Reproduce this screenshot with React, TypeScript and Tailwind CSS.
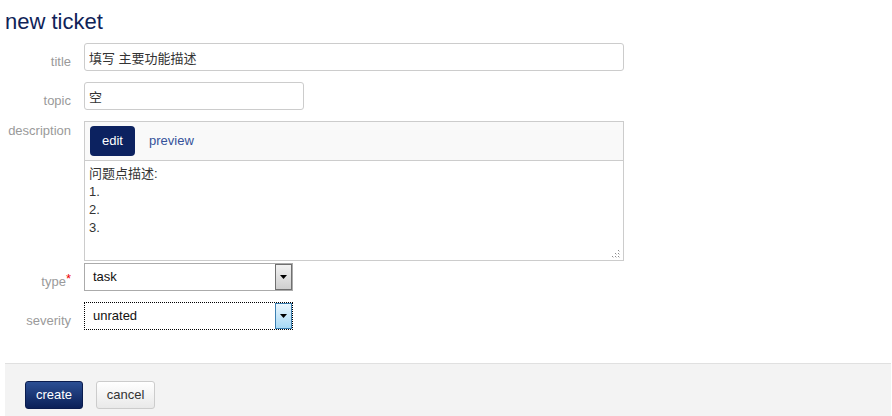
import React from "react";

const font = "font-['Liberation_Sans','Noto_Sans_CJK_SC',sans-serif]";

function Label({ children, pad }: { children: React.ReactNode; pad: string }) {
  return (
    <div className={`w-[66px] shrink-0 text-right text-[13px] leading-[16px] text-[#9a9a9a] ${pad}`}>
      {children}
    </div>
  );
}

function Arrow({ focused }: { focused?: boolean }) {
  return (
    <div
      className={
        focused
          ? "flex h-full w-[17px] items-center justify-center border border-[#3c7fb1] bg-gradient-to-b from-[#eaf6fd] to-[#a7d9f5]"
          : "flex h-full w-[17px] items-center justify-center border border-[#707070] bg-gradient-to-b from-[#f2f2f2] to-[#cfcfcf]"
      }
    >
      <svg width="7" height="4" viewBox="0 0 7 4">
        <path d="M0 0h7L3.5 4z" fill="#000" />
      </svg>
    </div>
  );
}

function Grip() {
  const dots = [
    [7, 1],
    [4, 4],
    [7, 4],
    [1, 7],
    [4, 7],
    [7, 7],
  ];
  return (
    <svg className="absolute bottom-[2px] right-[3px]" width="9" height="9" viewBox="0 0 9 9">
      {dots.map(([x, y]) => (
        <g key={`${x}-${y}`}>
          <rect x={x} y={y} width="1" height="1" fill="#8a8a8a" />
          <rect x={x + 1} y={y + 1} width="1" height="1" fill="#d6d6d6" />
        </g>
      ))}
    </svg>
  );
}

export default function App() {
  return (
    <div className={`h-[416px] w-[892px] overflow-hidden bg-white pl-[5px] pr-[1px] ${font}`}>
      <h1 className="pt-[9px] text-[22px] leading-[26px] text-[#0f2358]">new ticket</h1>

      <div className="mt-[8px] flex flex-col">
        <div className="flex gap-[13px]">
          <Label pad="pt-[11px]">title</Label>
          <input
            readOnly
            defaultValue="填写 主要功能描述"
            className="h-[28px] w-[540px] rounded-[3px] border border-[#ccc] px-[4px] text-[13px] text-[#333] outline-none"
          />
        </div>

        <div className="mt-[11px] flex gap-[13px]">
          <Label pad="pt-[11px]">topic</Label>
          <input
            readOnly
            defaultValue="空"
            className="h-[28px] w-[220px] rounded-[3px] border border-[#ccc] px-[4px] text-[13px] text-[#333] outline-none"
          />
        </div>

        <div className="mt-[11px] flex gap-[13px]">
          <Label pad="pt-[2px]">description</Label>
          <div className="flex h-[140px] w-[540px] flex-col border border-[#ccc]">
            <div className="flex h-[39px] shrink-0 items-center gap-[14px] border-b border-[#ccc] bg-[#f9f9f9] pl-[5px]">
              <button className="h-[30px] w-[45px] rounded-[4px] bg-[#0c2260] text-[13px] text-white">
                edit
              </button>
              <span className="text-[13px] text-[#35529a]">preview</span>
            </div>
            <div className="relative flex-1">
              <textarea
                readOnly
                defaultValue={"问题点描述:\n1.\n2.\n3."}
                className="h-full w-full resize-none px-[4px] pt-[4px] text-[13px] leading-[18px] text-[#333] outline-none"
              />
              <Grip />
            </div>
          </div>
        </div>

        <div className="mt-[2px] flex gap-[13px]">
          <Label pad="pt-[11px]">
            type<span className="relative top-[-3px] text-[#e00]">*</span>
          </Label>
          <div className="flex h-[28px] w-[209px] items-center justify-between border border-[#ababab] bg-white">
            <span className="pl-[8px] text-[13px] text-[#111]">task</span>
            <Arrow />
          </div>
        </div>

        <div className="mt-[11px] flex gap-[13px]">
          <Label pad="pt-[11px]">severity</Label>
          <div className="flex h-[28px] w-[209px] items-center justify-between border border-dotted border-black bg-white">
            <span className="pl-[8px] text-[13px] text-[#111]">unrated</span>
            <Arrow focused />
          </div>
        </div>
      </div>

      <div className="mt-[33px] flex h-[53px] gap-[13px] border-t border-[#e0e0e0] bg-[#f3f3f3] pl-[20px] pt-[17px]">
        <button className="h-[28px] w-[58px] rounded-[3px] border border-[#0a1c4e] bg-gradient-to-b from-[#2c4f94] to-[#0b2058] text-[13px] text-white">
          create
        </button>
        <button className="h-[28px] w-[59px] rounded-[3px] border border-[#ccc] bg-gradient-to-b from-white to-[#e9e9e9] text-[13px] text-[#333]">
          cancel
        </button>
      </div>
    </div>
  );
}
